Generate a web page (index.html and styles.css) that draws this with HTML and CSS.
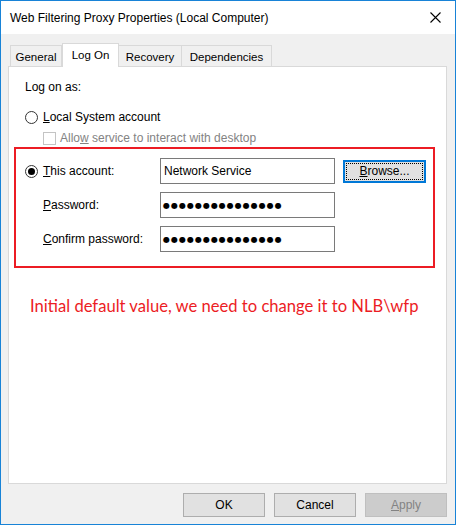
FILE: index.html
```html
<!DOCTYPE html>
<html lang="en">
<head>
    <meta charset="UTF-8">
    <meta name="viewport" content="width=device-width, initial-scale=1.0">
    <title>Web Filtering Proxy Properties (Local Computer)</title>
    <link rel="stylesheet" href="styles.css">
</head>
<body>

    <div class="window">
        <div class="titlebar">
            <span class="title">Web Filtering Proxy Properties (Local Computer)</span>
            <svg class="close" width="11" height="11" viewBox="0 0 11 11">
                <path d="M0.5 0.5 L10.5 10.5 M10.5 0.5 L0.5 10.5" stroke="#000" stroke-width="1.1" fill="none"/>
            </svg>
        </div>

        <div class="content">
            <div class="tabs">
                <div class="tab tab-general">General</div>
                <div class="tab tab-logon active">Log On</div>
                <div class="tab tab-recovery">Recovery</div>
                <div class="tab tab-deps">Dependencies</div>
            </div>

            <div class="panel">
                <div class="caption">Log on as:</div>

                <div class="option">
                    <span class="radio"></span>
                    <span><u>L</u>ocal System account</span>
                </div>

                <div class="option sub disabled">
                    <span class="check"></span>
                    <span>Allo<u>w</u> service to interact with desktop</span>
                </div>

                <div class="highlight">
                    <div class="field-row">
                        <div class="field-label">
                            <span class="radio checked"></span>
                            <span><u>T</u>his account:</span>
                        </div>
                        <div class="textbox">Network Service</div>
                        <button class="btn btn-default"><u>B</u>rowse...</button>
                    </div>
                    <div class="field-row">
                        <div class="field-label indent"><span><u>P</u>assword:</span></div>
                        <div class="textbox dots">●●●●●●●●●●●●●●●</div>
                    </div>
                    <div class="field-row">
                        <div class="field-label indent"><span><u>C</u>onfirm password:</span></div>
                        <div class="textbox dots">●●●●●●●●●●●●●●●</div>
                    </div>
                </div>

                <p class="note">Initial default value, we need to change it to NLB\wfp</p>
            </div>

            <div class="buttons">
                <button class="btn">OK</button>
                <button class="btn">Cancel</button>
                <button class="btn" disabled><u>A</u>pply</button>
            </div>
        </div>
    </div>

</body>
</html>
```

FILE: styles.css
```css
body {
    margin: 0;
    padding: 0;
    background-color: #fff;
    font-family: 'Liberation Sans', Arial, sans-serif;
    font-size: 12px;
    color: #000;
}

.window {
    width: 456px;
    height: 525px;
    border: 1px solid #1883d7;
    box-sizing: border-box;
    display: flex;
    flex-direction: column;
}

.titlebar {
    height: 33px;
    background-color: #fff;
    display: flex;
    align-items: center;
    padding-left: 9px;
}

.title {
    font-size: 12px;
    color: #000;
}

.close {
    margin-left: auto;
    margin-right: 14px;
}

.content {
    flex: 1;
    background-color: #f0f0f0;
    padding: 9px 8px 0 7px;
}

.tabs {
    height: 23px;
    display: flex;
    align-items: flex-end;
    padding-left: 2px;
    font-size: 11.5px;
}

.tab {
    height: 21px;
    box-sizing: border-box;
    border: 1px solid #d9d9d9;
    border-bottom: none;
    background-color: #f0f0f0;
    display: flex;
    align-items: center;
    justify-content: center;
    padding-top: 1px;
}

.tab + .tab {
    border-left: none;
}

.tab-general { width: 52px; }
.tab-logon { width: 57px; }
.tab-recovery { width: 63px; }
.tab-deps { width: 90px; }

.tab.active {
    height: 24px;
    margin-bottom: -1px;
    background-color: #fff;
    border-left: 1px solid #d9d9d9;
    position: relative;
    z-index: 1;
    padding-top: 0;
    padding-bottom: 2px;
}

.tab.active + .tab {
    border-left: none;
}

.panel {
    height: 418px;
    box-sizing: border-box;
    border: 1px solid #d9d9d9;
    background-color: #fff;
    padding-left: 16px;
    display: flex;
    flex-direction: column;
}

.caption {
    margin-top: 13px;
    line-height: 15px;
}

.option {
    display: flex;
    align-items: center;
    gap: 5px;
    height: 16px;
    margin-top: 14px;
}

.option.sub {
    height: 14px;
    margin-top: 6px;
    margin-left: 18px;
    gap: 4px;
}

.disabled {
    color: #838383;
}

.radio {
    width: 13px;
    height: 13px;
    box-sizing: border-box;
    border: 1px solid #333;
    border-radius: 50%;
    background-color: #fff;
    display: flex;
    align-items: center;
    justify-content: center;
    flex-shrink: 0;
}

.radio.checked::after {
    content: "";
    width: 7px;
    height: 7px;
    border-radius: 50%;
    background-color: #000;
}

.check {
    width: 13px;
    height: 13px;
    box-sizing: border-box;
    border: 1px solid #c4c4c4;
    background-color: #fff;
}

.highlight {
    margin-top: 2px;
    margin-left: -11px;
    width: 421px;
    box-sizing: border-box;
    border: 2px solid #ec1c24;
    padding: 9px 0 14px 9px;
    display: flex;
    flex-direction: column;
    gap: 8px;
}

.field-row {
    display: flex;
    align-items: center;
    height: 26px;
}

.field-label {
    width: 135px;
    display: flex;
    align-items: center;
    gap: 5px;
}

.field-label.indent {
    padding-left: 18px;
    box-sizing: border-box;
}

.textbox {
    width: 175px;
    height: 26px;
    box-sizing: border-box;
    border: 1px solid #7a7a7a;
    background-color: #fff;
    padding-left: 3px;
    display: flex;
    align-items: center;
}

.dots {
    font-family: 'DejaVu Sans', sans-serif;
    font-size: 8px;
    letter-spacing: 1px;
    padding-left: 2px;
}

.btn {
    width: 82px;
    height: 24px;
    box-sizing: border-box;
    border: 1px solid #adadad;
    background-color: #e1e1e1;
    font-family: 'Liberation Sans', Arial, sans-serif;
    font-size: 12px;
    color: #000;
    padding: 0;
}

.btn-default {
    width: 83px;
    height: 23px;
    margin-left: 8px;
    border: 1px solid #0078d7;
    box-shadow: inset 0 0 0 1px #0078d7;
    outline: 1px dotted #000;
    outline-offset: -4px;
}

.btn:disabled {
    background-color: #cccccc;
    border-color: #bfbfbf;
    color: #838383;
}

.note {
    margin: 28px 0 0 5px;
    font-family: Lato, 'Liberation Sans', sans-serif;
    font-size: 16.6px;
    line-height: 20px;
    color: #ec1c24;
}

.buttons {
    display: flex;
    justify-content: flex-end;
    gap: 9px;
    margin-top: 9px;
}
```
